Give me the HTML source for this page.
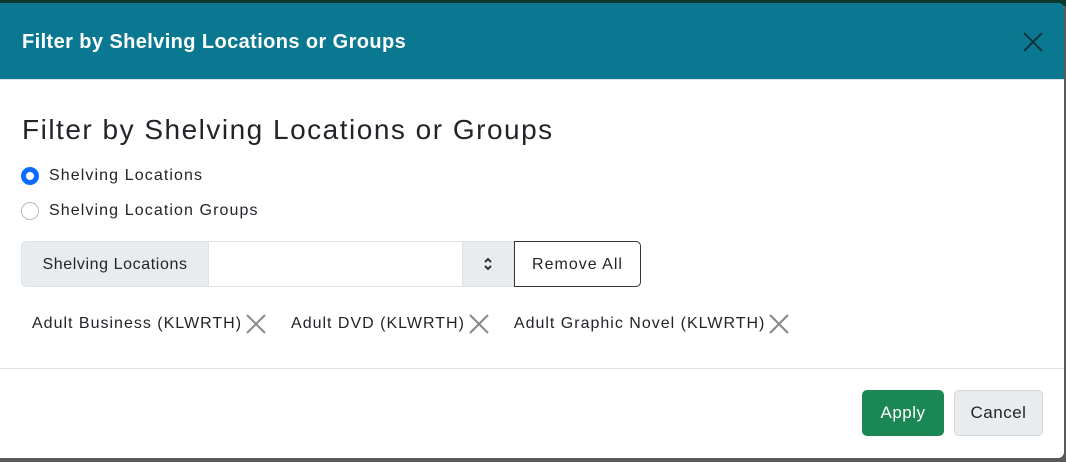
<!DOCTYPE html>
<html><head><meta charset="utf-8"><style>
*{box-sizing:border-box;margin:0;padding:0}
body{width:1066px;height:462px;overflow:hidden;background:#5a5a5a;font-family:"Liberation Sans",sans-serif;color:#212529;position:relative}
.top{position:absolute;left:0;top:0;width:1066px;height:6px;background:#0b3a2c}
.modal{position:absolute;left:0;top:3px;width:1064px;height:455px;background:#fff;border-radius:0 6px 6px 0;overflow:hidden}
.hdr{height:77px;background:#0a7891;color:#fff;font-weight:bold;font-size:20px;letter-spacing:0.4px;padding:28px 22px;position:relative;border-bottom:1px solid #dee2e6}
.x{position:absolute;right:20px;top:28px}
h3{font-weight:normal;font-size:28px;letter-spacing:1.5px;position:absolute;left:22px;top:111px}
.radio{position:absolute;left:21px;font-size:16px;letter-spacing:1.1px;display:flex;align-items:center}
.radio i{width:18px;height:18px;border-radius:50%;border:1px solid #bbb;margin-right:10px;display:inline-block}
.radio i.on{border:5px solid #0d6efd;background:#fff}
.grp{position:absolute;left:21px;top:241px;height:46px;display:flex}
.lab{width:188px;background:#e9ecef;border:1px solid #dee2e6;border-radius:5px 0 0 5px;font-size:16px;letter-spacing:0.6px;line-height:46px;text-align:center}
.inp{width:253px;border:1px solid #dee2e6;border-left:none;border-right:none}
.sp{width:52px;background:#e9ecef;border:1px solid #dee2e6;display:flex;align-items:center;justify-content:center}
.rm{width:127px;border:1px solid #333;border-radius:0 5px 5px 0;font-size:16px;letter-spacing:1px;line-height:46px;text-align:center}
.tags{position:absolute;left:32px;font-size:16px;letter-spacing:1px;display:flex}
.tags span{display:flex;align-items:center;margin-right:24px}
.tags svg{margin-left:3px}
.ft{position:absolute;left:0;top:365px;width:100%;border-top:1px solid #dee2e6}
.btn{position:absolute;top:387px;height:46px;border-radius:5px;font-size:17px;letter-spacing:0.5px;line-height:46px;text-align:center}
</style></head><body>
<div class="top"></div>
<div class="modal">
<div class="hdr">Filter by Shelving Locations or Groups
<svg class="x" width="22" height="22" viewBox="0 0 22 22"><path d="M2 2L20 20M20 2L2 20" stroke="#0d3540" stroke-width="2"/></svg></div>
<h3>Filter by Shelving Locations or Groups</h3>
<div class="radio" style="top:164px"><i class="on"></i>Shelving Locations</div>
<div class="radio" style="top:199px"><i></i>Shelving Location Groups</div>
<div class="grp" style="top:238px"><div class="lab">Shelving Locations</div><div class="inp"></div>
<div class="sp"><svg width="12" height="18" viewBox="0 0 12 18"><path d="M3 7L6 4L9 7M3 11L6 14L9 11" stroke="#333" stroke-width="2" fill="none"/></svg></div>
<div class="rm">Remove All</div></div>
<div class="tags" style="top:310px">
<span>Adult Business (KLWRTH)<svg width="22" height="22" viewBox="0 0 22 22"><path d="M2 2L20 20M20 2L2 20" stroke="#888" stroke-width="2"/></svg></span>
<span>Adult DVD (KLWRTH)<svg width="22" height="22" viewBox="0 0 22 22"><path d="M2 2L20 20M20 2L2 20" stroke="#888" stroke-width="2"/></svg></span>
<span>Adult Graphic Novel (KLWRTH)<svg width="22" height="22" viewBox="0 0 22 22"><path d="M2 2L20 20M20 2L2 20" stroke="#888" stroke-width="2"/></svg></span>
</div>
<div class="ft"></div>
<div class="btn" style="left:862px;width:82px;background:#1b8754;color:#fff">Apply</div>
<div class="btn" style="left:954px;width:89px;background:#e9ecef;border:1px solid #d3d6d9;line-height:44px">Cancel</div>
</div>
</body></html>
